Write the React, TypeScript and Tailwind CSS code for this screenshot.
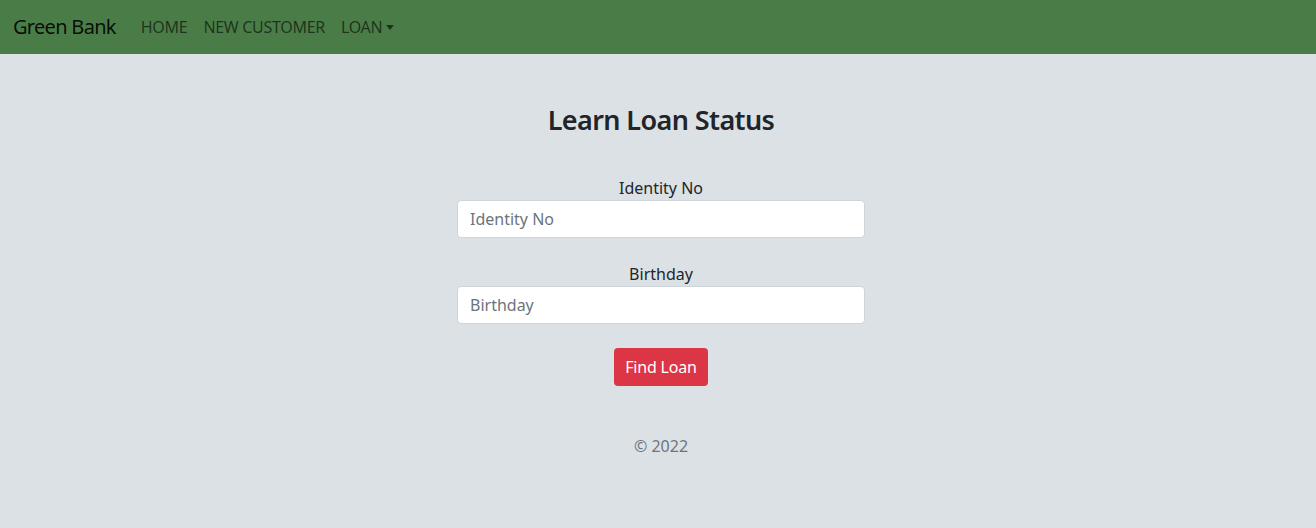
export default function App() {
  return (
    <div className="min-h-[528px] bg-[#dce1e5] font-['Noto_Sans',_'Open_Sans',_sans-serif] text-[#212529]">
      {/* Navbar */}
      <nav className="h-[54px] bg-[#4a7c47] flex items-center px-[13px]">
        <span className="text-[20px] tracking-[-0.7px] text-[rgba(0,0,0,0.9)] mr-[17px]">Green Bank</span>
        <ul className="flex items-center text-[16px] tracking-[-0.3px] text-[rgba(0,0,0,0.6)]">
          <li className="px-2">HOME</li>
          <li className="px-2">NEW CUSTOMER</li>
          <li className="px-2 flex items-center">
            LOAN
            <span className="ml-[4px] mt-[1px] border-x-[4.5px] border-t-[5px] border-x-transparent border-t-[rgba(0,0,0,0.6)]" />
          </li>
        </ul>
      </nav>

      <main className="flex flex-col items-center pt-[50px] pl-[6px]">
        <h3 className="text-[27px] tracking-[-0.6px] font-semibold leading-[1.2]">Learn Loan Status</h3>

        <form className="w-[408px] mt-[40px] flex flex-col items-center">
          <label className="text-[16px] leading-6">Identity No</label>
          <input
            placeholder="Identity No"
            className="w-full h-[38px] bg-white border border-[#ced4da] rounded-[4px] px-3 text-[16px] placeholder:text-[#6c757d] outline-none"
          />

          <label className="text-[16px] leading-6 mt-[24px]">Birthday</label>
          <input
            placeholder="Birthday"
            className="w-full h-[38px] bg-white border border-[#ced4da] rounded-[4px] px-3 text-[16px] placeholder:text-[#6c757d] outline-none"
          />

          <button
            type="button"
            className="mt-[24px] h-[38px] px-[11px] bg-[#dc3545] text-white text-[16px] tracking-[-0.2px] rounded-[4px]"
          >
            Find Loan
          </button>
        </form>

        <footer className="mt-[48px] text-[16px] leading-6 text-[#6c757d]">© 2022</footer>
      </main>
    </div>
  );
}
